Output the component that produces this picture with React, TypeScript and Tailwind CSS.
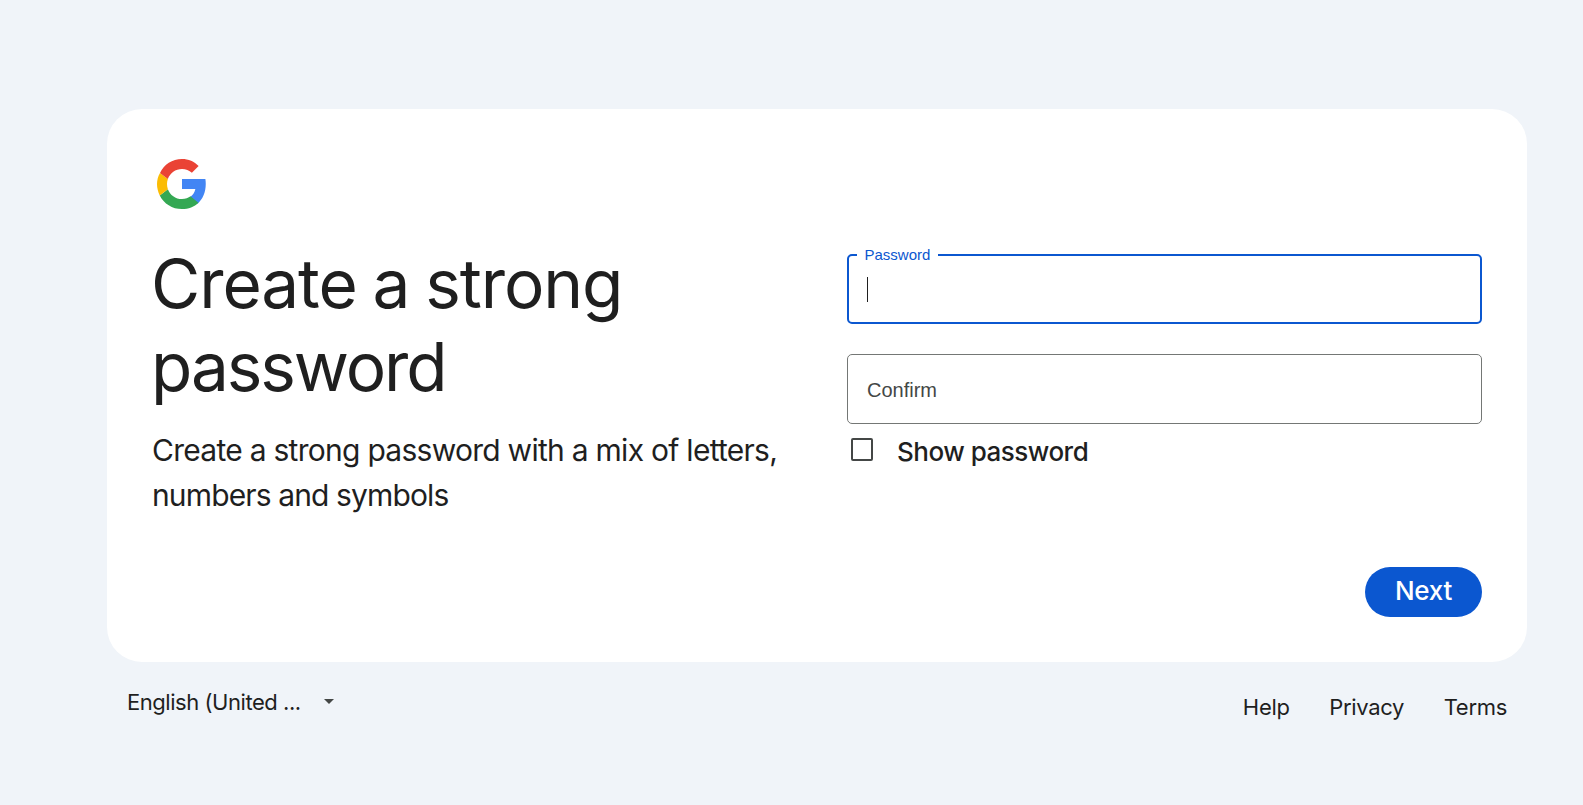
function GoogleLogo() {
  return (
    <svg viewBox="0 0 48 48" className="block size-[60px]" aria-hidden="true">
      <path fill="#4285F4" d="M42.700 20H24v8h10.700c-.6 2.800-2.100 5-4.300 6.500l6.200 5.200c3.900-3.600 6.400-9 6.400-15.700 0-1.400-.1-2.700-.3-4z" />
      <path fill="#34A853" d="M24 44c5.200 0 9.900-1.900 13.100-5.100l-6.300-5.100C29.200 35.100 26.700 36 24 36c-5.200 0-9.600-3.300-11.300-7.900l-6.500 5C9.500 39.600 16.200 44 24 44z" />
      <path fill="#FBBC04" d="M12.700 28.100C12.200 26.800 12 25.400 12 24s.2-2.800.7-4.100l-6.300-4.800C4.800 17.800 4 20.800 4 24s.8 6.200 2.200 9.100z" />
      <path fill="#EA4335" d="M24 12c3 0 5.800 1.200 7.900 3l5.400-5.400C33.800 6.100 29.200 4 24 4c-7.800 0-14.500 4.500-17.600 11.100l6.300 4.800C14.400 15.300 18.800 12 24 12z" />
    </svg>
  );
}

export default function App() {
  return (
    <div className="flex h-screen w-full flex-col overflow-hidden bg-[#f0f4f9] pr-14 pl-[107px] pt-[109px] font-['Inter',sans-serif] text-[#1f1f1f]">
      <main className="flex h-[553px] shrink-0 justify-between rounded-[35px] bg-white p-[45px]">
        <section className="w-[650px]">
          <GoogleLogo />
          <h1 className="mt-7 text-[67.5px] leading-[83px] font-normal whitespace-nowrap">
            <span className="-ml-px block tracking-[-1.1px] [word-spacing:-2px]">Create a strong</span>
            <span className="-ml-px block tracking-[-2.1px]">password</span>
          </h1>
          <p className="mt-5 text-[30px] leading-[45px] tracking-[-0.73px] whitespace-nowrap">
            <span className="block">Create a strong password with a mix of letters,</span>
            <span className="block tracking-[-0.87px]">numbers and symbols</span>
          </p>
        </section>

        <form className="flex w-[635px] flex-col pt-[100px]">
          <label className="relative flex h-[70px] flex-col rounded-[5px] border-2 border-[#0b57d0] pt-[21px] pl-[18px] font-['Liberation_Sans',sans-serif]">
            <span className="absolute -top-[10px] left-2 w-[81px] bg-white pl-[7.5px] text-[15px] leading-[18px] text-[#0b57d0]">
              Password
            </span>
            <span className="h-[25px] w-px bg-[#1f1f1f]" />
          </label>
          <label className="mt-[30px] flex h-[70px] items-center rounded-[5px] border border-[#747775] pt-[2px] pl-[19px] font-['Liberation_Sans',sans-serif] text-[20px] text-[#444746]">
            Confirm
          </label>
          <label className="mt-[11px] flex h-8 items-center pl-1">
            <span className="-mt-[3px] h-[23px] w-[22px] rounded-[2px] border-2 border-[#444746]" />
            <span className="mt-[2px] ml-6 text-[26px] leading-8 font-medium tracking-[-0.5px]">Show password</span>
          </label>
          <button
            type="button"
            className="mt-auto flex h-[50px] w-[117px] items-center justify-center self-end rounded-full bg-[#0b57d0] pb-[3px] text-[26px] leading-8 font-medium tracking-[-0.3px] text-white"
          >
            Next
          </button>
        </form>
      </main>

      <footer className="flex items-start justify-between px-5 text-[22px] leading-8">
        <div className="mt-6 flex items-center">
          <span className="w-[197px] tracking-[-0.46px]">English (United ...</span>
          <svg viewBox="0 0 10 5" className="-mt-[2px] h-[5px] w-[10px]" aria-hidden="true">
            <path d="M0 0h10L5 5z" fill="#444746" />
          </svg>
        </div>
        <nav className="mt-[29px] flex gap-[39.5px] tracking-[-0.3px]">
          <span>Help</span>
          <span>Privacy</span>
          <span>Terms</span>
        </nav>
      </footer>
    </div>
  );
}
